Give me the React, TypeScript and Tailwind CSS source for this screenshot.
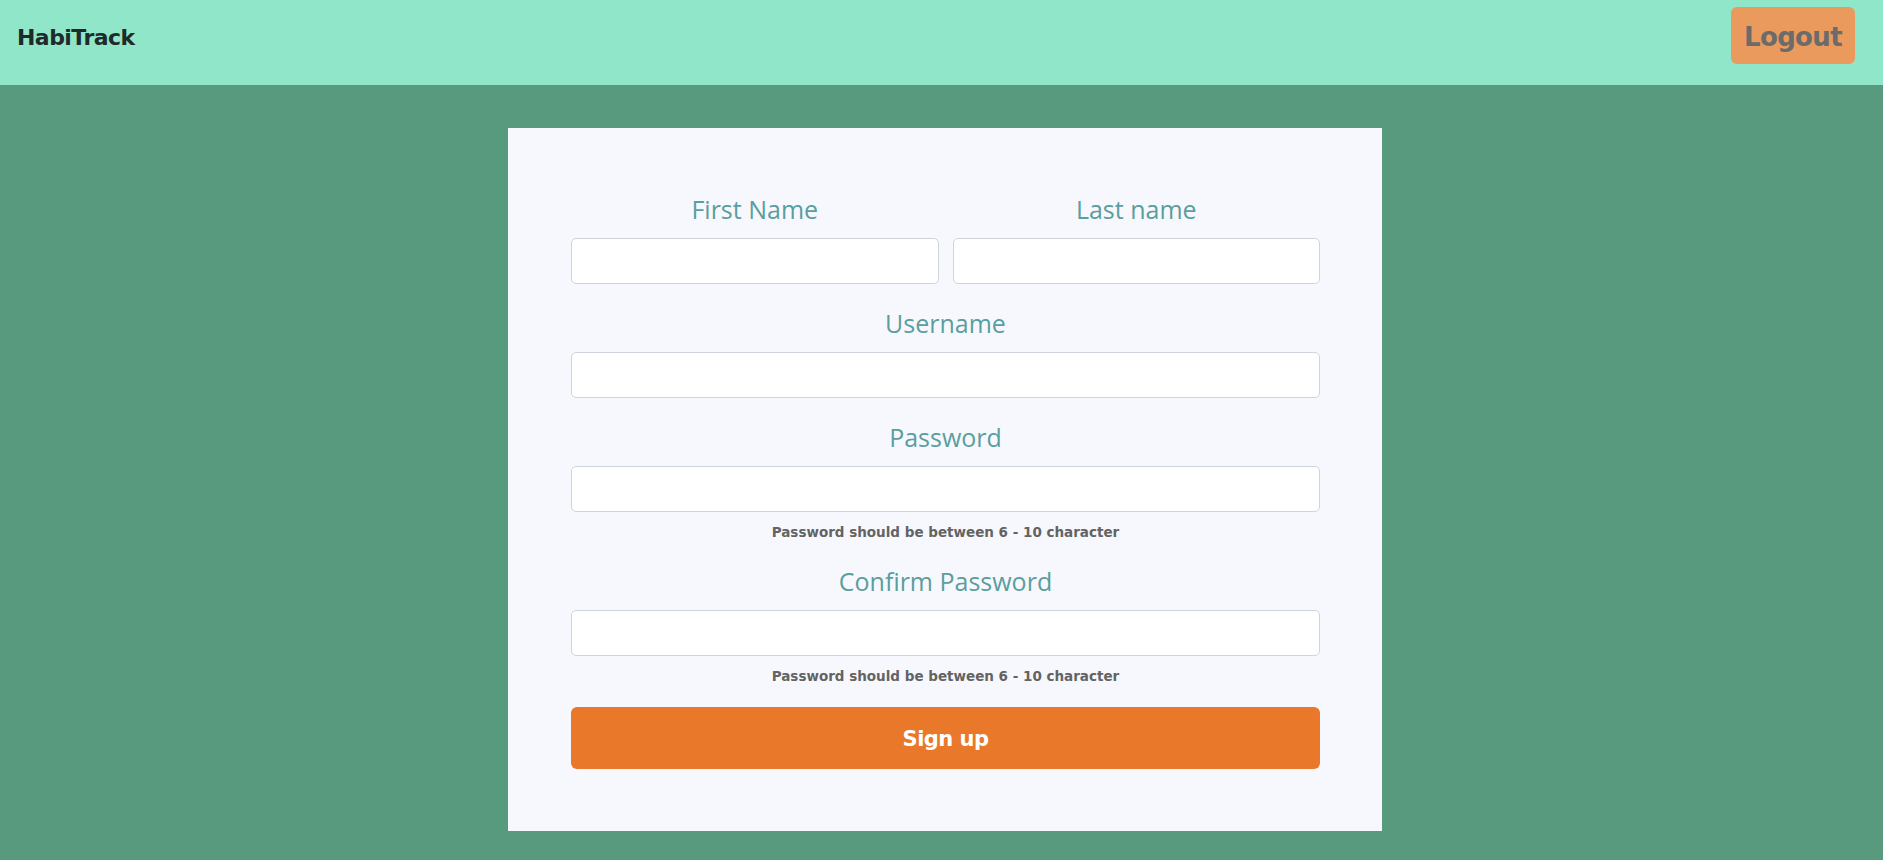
import React, { useState } from 'react';

const labelCls = "block text-center font-['Open_Sans',sans-serif] text-[25px] leading-[32px] text-[#5a9ea0] mb-[13px]";
const inputCls = "w-full h-[46px] bg-white border border-[#cfd4dc] rounded-[5px] px-3 outline-none text-[16px] text-gray-700";
const hintCls = "mt-[10px] text-center font-['DejaVu_Sans',sans-serif] text-[13.5px] leading-[20px] font-bold text-[#636363]";

const Field: React.FC<{ label: string; type?: string; hint?: string; value: string; onChange: (v: string) => void }> = ({ label, type = 'text', hint, value, onChange }) => (
  <div>
    <label className={labelCls}>{label}</label>
    <input type={type} value={value} onChange={(e) => onChange(e.target.value)} className={inputCls} />
    {hint && <p className={hintCls}>{hint}</p>}
  </div>
);

const App: React.FC = () => {
  const [form, setForm] = useState({ first: '', last: '', username: '', password: '', confirm: '' });
  const set = (k: keyof typeof form) => (v: string) => setForm(prev => ({ ...prev, [k]: v }));

  return (
    <div className="min-h-[860px] bg-[#579a7d] font-['Lato',sans-serif]">
      <header className="h-[85px] bg-[#90e6c9] flex items-start justify-between pl-[17px] pr-[28px] pt-[7px]">
        <div className="h-[57px] flex items-center pt-[4px]">
          <span className="font-['DejaVu_Sans',sans-serif] text-[22px] font-bold text-[#1f2a2a] tracking-tight">HabiTrack</span>
        </div>
        <button className="h-[57px] w-[124px] pt-[4px] rounded-[6px] bg-[#e99a5c] text-[#6b6b6b] font-['DejaVu_Sans',sans-serif] text-[26px] font-bold tracking-tight">
          Logout
        </button>
      </header>

      <main className="flex justify-center pl-[7px] pt-[43px] pb-[29px]">
        <form onSubmit={(e) => e.preventDefault()} className="w-[874px] bg-[#f7f8fd] pl-[63px] pr-[62px] pt-[65px] pb-[62px] flex flex-col gap-[23px]">
          <div className="grid grid-cols-2 gap-x-[14px]">
            <Field label="First Name" value={form.first} onChange={set('first')} />
            <Field label="Last name" value={form.last} onChange={set('last')} />
          </div>
          <Field label="Username" value={form.username} onChange={set('username')} />
          <Field label="Password" type="password" hint="Password should be between 6 - 10 character" value={form.password} onChange={set('password')} />
          <Field label="Confirm Password" type="password" hint="Password should be between 6 - 10 character" value={form.confirm} onChange={set('confirm')} />
          <button type="submit" className="h-[62px] -mt-[2px] pt-[4px] w-full rounded-[6px] bg-[#e9782b] text-white font-['DejaVu_Sans',sans-serif] text-[21px] font-bold tracking-tight">
            Sign up
          </button>
        </form>
      </main>
    </div>
  );
};

export default App;
